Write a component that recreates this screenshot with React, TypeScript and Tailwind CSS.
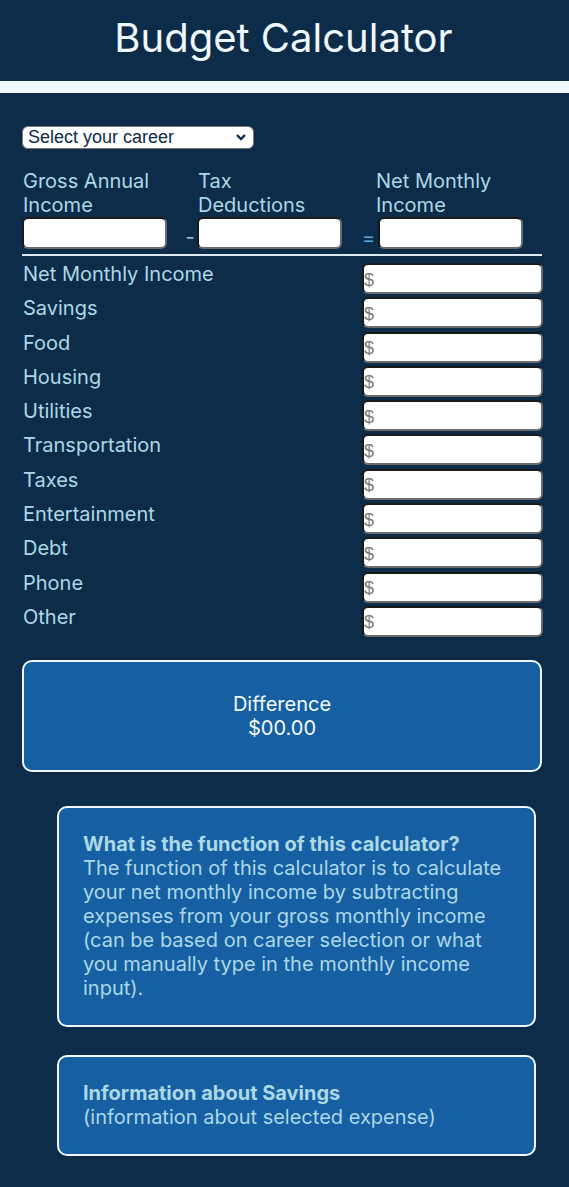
import React from "react";

const rows = [
  "Net Monthly Income",
  "Savings",
  "Food",
  "Housing",
  "Utilities",
  "Transportation",
  "Taxes",
  "Entertainment",
  "Debt",
  "Phone",
  "Other",
];

const inputCls =
  "block bg-white rounded-[6px] border-2 border-t-[#1a1a1a] border-l-[#1a1a1a] border-r-[#6b6b6b] border-b-[#6b6b6b] outline-none";

export default function App() {
  return (
    <div className="min-h-[1187px] bg-[#0c2c4a] font-['Inter',sans-serif] pb-[31px]">
      <header className="h-[81px] flex items-center justify-center">
        <h1 className="text-[40px] leading-none text-[#f0f8ff] font-normal -mt-[6px] -ml-[2px]">
          Budget Calculator
        </h1>
      </header>
      <div className="h-[12px] bg-[#f0f8ff]" />

      <div className="pl-[22px] pr-[27px]">
        <div className="relative mt-[33px] w-[232px]">
          <select className="appearance-none block w-[232px] h-[23px] rounded-[6px] bg-white border border-[#767676] pl-[5px] text-[18px] leading-[21px] text-[#0c2c4a] font-['Liberation_Sans',Arial,sans-serif] outline-none">
            <option>Select your career</option>
          </select>
          <svg
            className="absolute right-[7px] top-[7px] pointer-events-none"
            width="12"
            height="9"
            viewBox="0 0 12 9"
          >
            <path d="M2 2 L6 6 L10 2" fill="none" stroke="#0c2c4a" strokeWidth="2.4" />
          </svg>
        </div>

        <div className="mt-[20px] pl-[1px] grid grid-cols-[167px_8px_170px_8px_auto] text-[20px] leading-[24px] text-[#add8e6]">
          <div>
            Gross Annual
            <br />
            Income
          </div>
          <div />
          <div>
            Tax
            <br />
            Deductions
          </div>
          <div />
          <div>
            Net Monthly
            <br />
            Income
          </div>

          <input className={`${inputCls} w-[145px] h-[32px] -ml-[1px]`} />
          <div className="flex items-end justify-center pb-[1px] text-[20px] leading-[22px] text-[#9cc3d6] -ml-[8px]">-</div>
          <input className={`${inputCls} w-[145px] h-[32px] -ml-[1px]`} />
          <div className="flex items-end pb-[0px] text-[20px] leading-[22px] text-[#5aa9e6] -ml-[6px]">=</div>
          <input className={`${inputCls} w-[145px] h-[32px] ml-[2px]`} />
        </div>

        <div className="mt-[5px] h-[2px] bg-[#dfe9f1]" />

        <div className="mt-[7px] flex flex-col gap-[3.3px]">
          {rows.map((r) => (
            <div key={r} className="flex items-start justify-between pl-[1px]">
              <span className="text-[20px] leading-[22px] text-[#add8e6]">{r}</span>
              <input
                placeholder="$"
                className={`${inputCls} w-[181px] h-[31px] -mr-[1px] pl-[0px] pt-[3px] text-[18px] font-['Liberation_Sans',Arial,sans-serif] placeholder:text-[#7a7a7a]`}
              />
            </div>
          ))}
        </div>

        <div className="mt-[23px] h-[112px] rounded-[10px] border-2 border-[#f0f8ff] bg-[#155fa2] flex flex-col items-center justify-center text-[20px] leading-[24px] text-[#f5faff]">
          <div>Difference</div>
          <div>$00.00</div>
        </div>

        <div className="ml-[35px] mr-[6px] mt-[34px] rounded-[10px] border-2 border-[#f0f8ff] bg-[#155fa2] px-[24px] pt-[24px] pb-[25px] text-[20px] leading-[24px] text-[#add8e6]">
          <div className="font-bold">What is the function of this calculator?</div>
          <div>
            The function of this calculator is to calculate your net monthly income by
            subtracting expenses from your gross monthly income (can be based on career
            selection or what you manually type in the monthly income input).
          </div>
        </div>

        <div className="ml-[35px] mr-[6px] mt-[28px] rounded-[10px] border-2 border-[#f0f8ff] bg-[#155fa2] px-[24px] pt-[24px] pb-[25px] text-[20px] leading-[24px] text-[#add8e6]">
          <div className="font-bold">Information about Savings</div>
          <div>(information about selected expense)</div>
        </div>
      </div>
    </div>
  );
}
